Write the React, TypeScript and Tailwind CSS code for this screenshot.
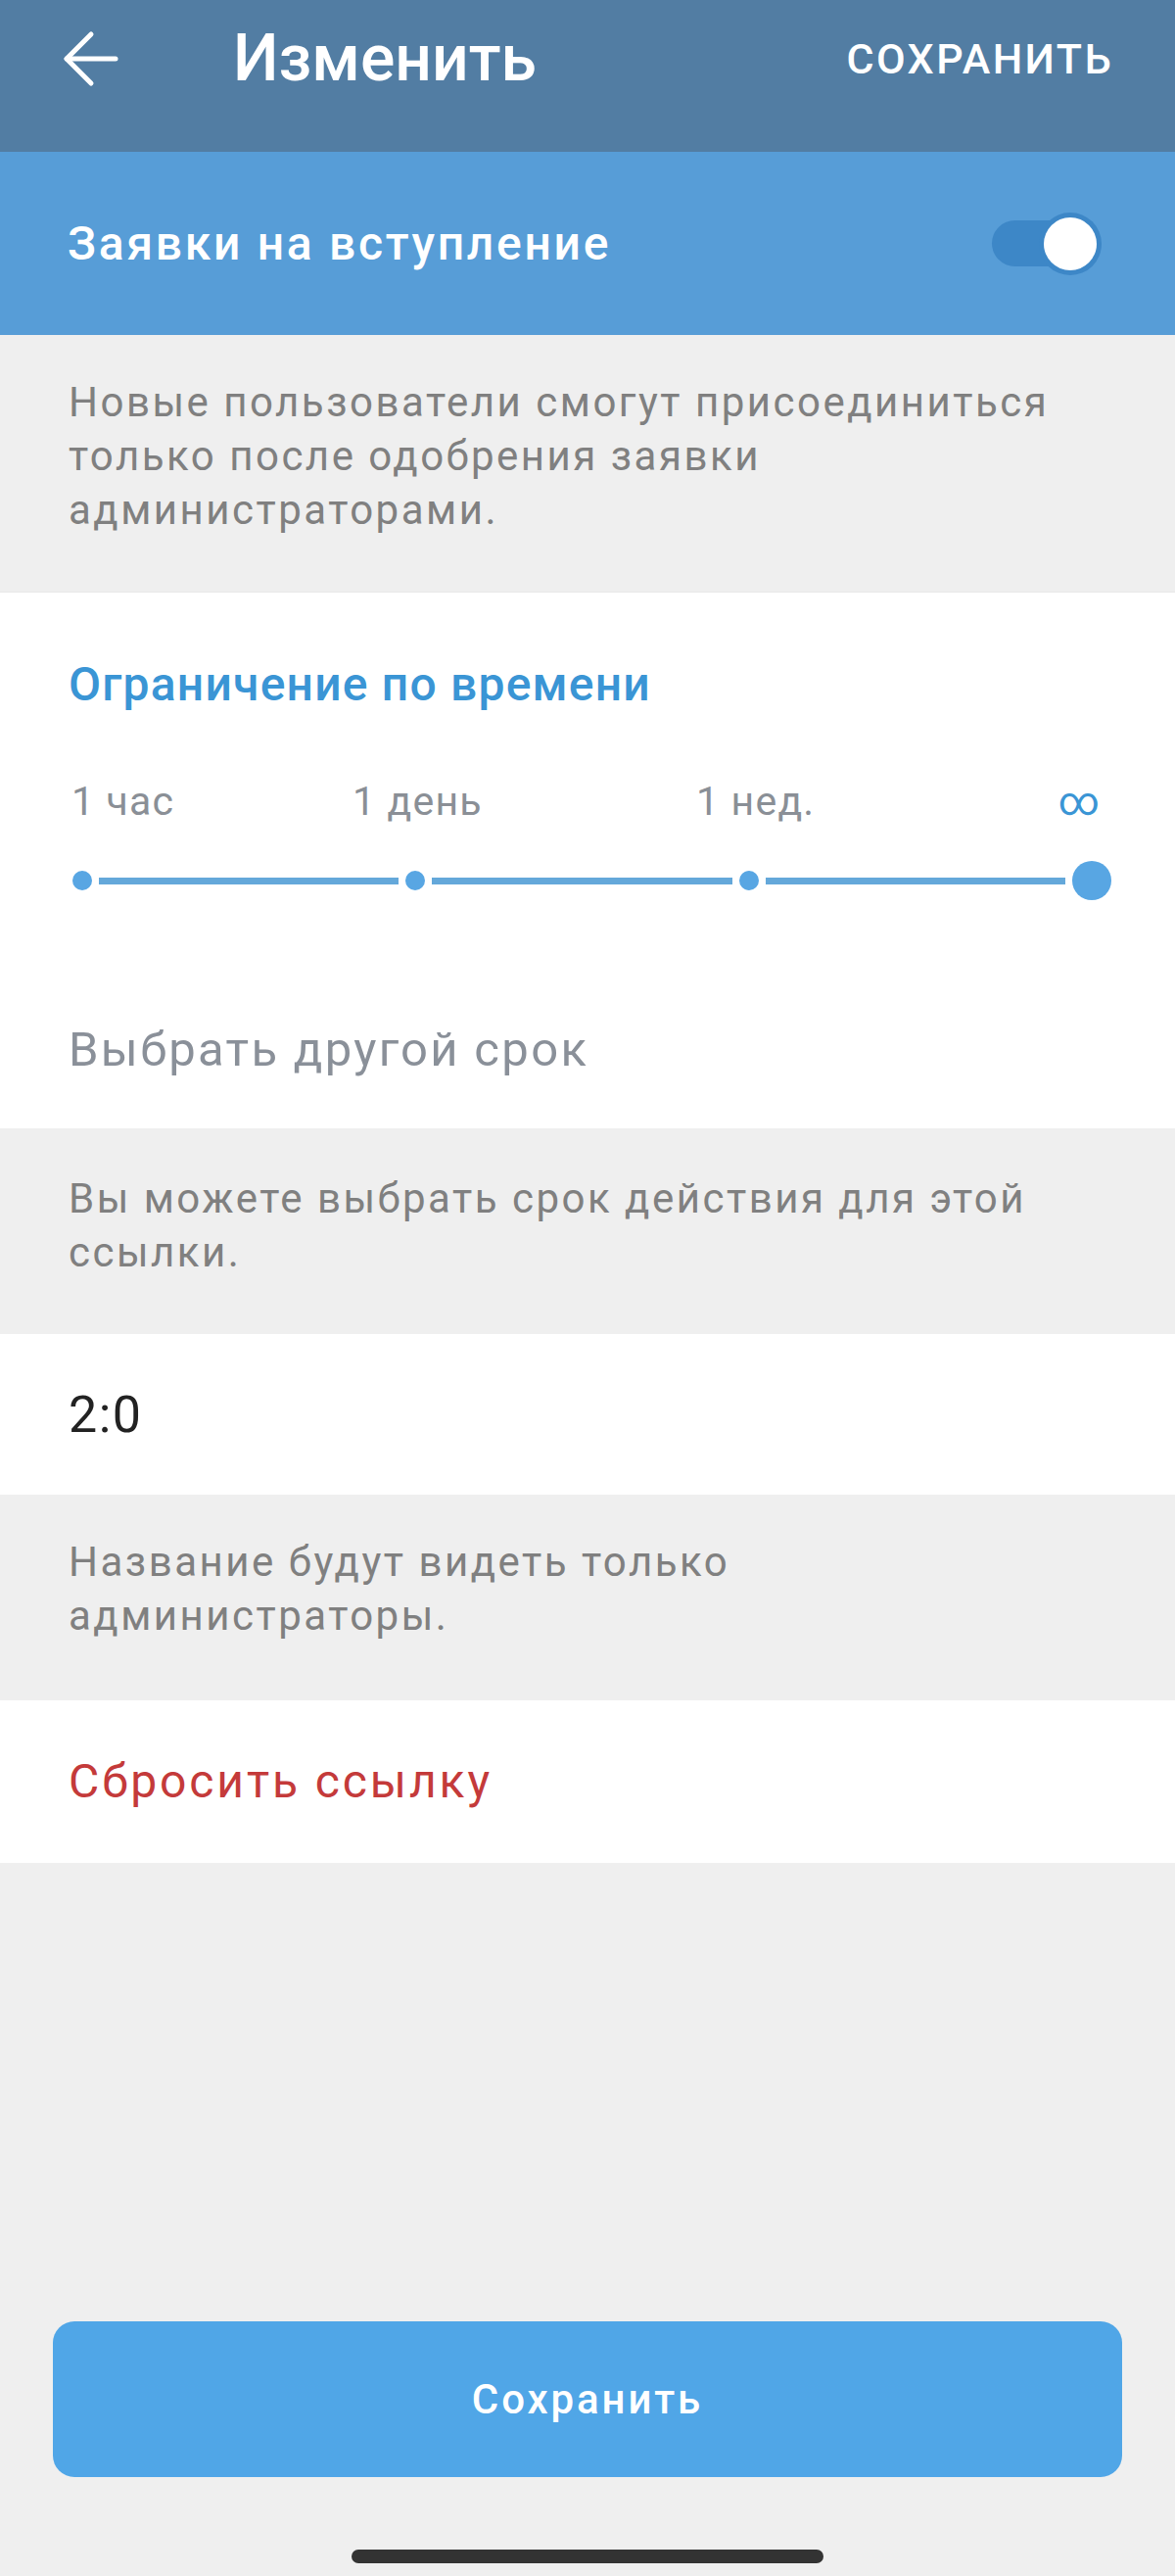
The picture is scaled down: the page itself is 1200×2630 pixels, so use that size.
import React, { useState } from 'react';

const STEPS = ['1 час', '1 день', '1 нед.'];

const Toggle: React.FC<{ on: boolean; onChange: () => void }> = ({ on, onChange }) => (
  <button onClick={onChange} className="relative w-[112px] h-[64px]">
    <span className="absolute left-0 top-[8px] w-[100px] h-[47px] rounded-full bg-[#3d87c7]" />
    <span
      className={`absolute top-0 w-[64px] h-[64px] rounded-full bg-[#3d87c7] flex items-center justify-center ${
        on ? 'right-0' : 'left-0'
      }`}
    >
      <span className="w-[54px] h-[54px] rounded-full bg-white" />
    </span>
  </button>
);

export default function App() {
  const [requests, setRequests] = useState(true);
  const [name, setName] = useState('2:0');

  return (
    <div className="min-h-[2630px] flex flex-col bg-[#efefef] font-['Roboto',sans-serif]">
      {/* Action bar */}
      <div className="bg-[#527da3] pb-[35px]">
        <div className="h-[120px] flex items-center pl-[64px] pr-[63px]">
          <svg width="58" height="58" viewBox="0 0 58 58" fill="none" stroke="white" strokeWidth="5" strokeLinecap="round" strokeLinejoin="round">
            <path d="M54 29H4" />
            <path d="M29 4L4 29L29 54" />
          </svg>
          <h1 className="ml-[116px] text-[66px] leading-none font-medium text-white">Изменить</h1>
          <button className="ml-auto text-[43px] leading-none font-medium tracking-[2.4px] text-white">СОХРАНИТЬ</button>
        </div>
      </div>

      {/* Join requests */}
      <div className="h-[187px] bg-[#579dd7] flex items-center justify-between pl-[69px] pr-[75px]">
        <span className="text-[48px] leading-none font-medium tracking-[2.7px] text-white">Заявки на вступление</span>
        <Toggle on={requests} onChange={() => setRequests(!requests)} />
      </div>
      <div className="pt-[41px] pb-[56px] px-[70px] text-[42px] leading-[55px] tracking-[2.5px] text-[#808080]">
        Новые пользователи смогут присоединиться
        <br />
        только после одобрения заявки
        <br />
        администраторами.
      </div>

      {/* Time limit */}
      <div className="bg-white pt-[70px] pb-[56px] border-t border-[#e8e8e8]">
        <div className="px-[70px] text-[48px] leading-none font-medium tracking-[1.2px] text-[#3a95d5]">Ограничение по времени</div>
        <div className="mt-[75px] flex pl-[73px] pr-[76px] text-[41px] leading-none tracking-[1.2px] text-[#8a8f96]">
          {STEPS.map((s, i) => (
            <span key={s} className={i === 0 ? 'w-[287px]' : i === 1 ? 'w-[351px]' : 'flex-1'}>
              {s}
            </span>
          ))}
          <span className="text-[#3a95d5]">∞</span>
        </div>
        <div className="mt-[40px] h-[40px] ml-[74px] mr-[65px] flex items-center gap-[7px]">
          <span className="w-[20px] h-[20px] rounded-full bg-[#58a6e3]" />
          <span className="flex-1 h-[7px] bg-[#64a8da]" />
          <span className="w-[20px] h-[20px] rounded-full bg-[#58a6e3]" />
          <span className="flex-1 h-[7px] bg-[#64a8da]" />
          <span className="w-[20px] h-[20px] rounded-full bg-[#58a6e3]" />
          <span className="flex-1 h-[7px] bg-[#64a8da]" />
          <span className="w-[40px] h-[40px] rounded-full bg-[#58a6e3]" />
        </div>
        <div className="mt-[128px] px-[70px] text-[49px] leading-none tracking-[2.3px] text-[#8a9099]">Выбрать другой срок</div>
      </div>
      <div className="pt-[44px] pb-[56px] px-[70px] text-[42px] leading-[55px] tracking-[2.5px] text-[#808080]">
        Вы можете выбрать срок действия для этой
        <br />
        ссылки.
      </div>

      {/* Link name */}
      <div className="h-[164px] bg-white flex items-center px-[70px]">
        <input
          value={name}
          onChange={(e) => setName(e.target.value)}
          className="w-full bg-transparent outline-none text-[52px] leading-none tracking-[1.5px] text-[#222222]"
        />
      </div>
      <div className="pt-[41px] pb-[59px] px-[70px] text-[42px] leading-[55px] tracking-[2.5px] text-[#808080]">
        Название будут видеть только
        <br />
        администраторы.
      </div>

      {/* Reset */}
      <div className="h-[166px] bg-white flex items-center px-[70px]">
        <span className="text-[48px] leading-none tracking-[2.9px] text-[#c43a3a]">Сбросить ссылку</span>
      </div>

      <div className="flex-1" />

      <button className="mx-[54px] h-[159px] rounded-[22px] bg-[#50a6e7] flex items-center justify-center text-[42px] leading-none font-medium tracking-[2.9px] text-white">
        Сохранить
      </button>
      <div className="pt-[74px] pb-[13px] flex justify-center">
        <span className="w-[482px] h-[14px] rounded-full bg-[#333333]" />
      </div>
    </div>
  );
}
